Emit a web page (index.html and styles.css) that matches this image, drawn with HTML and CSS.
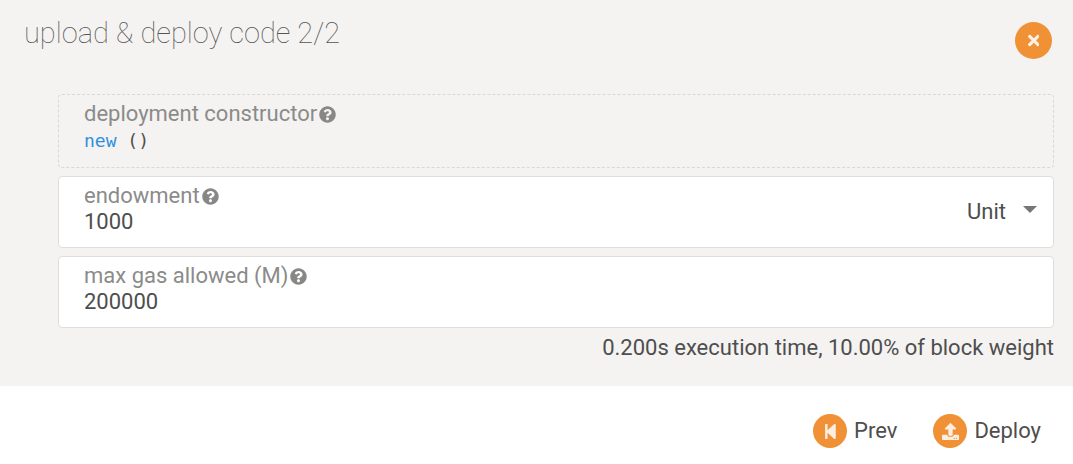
FILE: index.html
```html
<!DOCTYPE html>
<html lang="en">
<head>
<meta charset="utf-8">
<meta name="viewport" content="width=device-width, initial-scale=1">
<title>upload &amp; deploy code</title>
<link rel="stylesheet" href="styles.css">
</head>
<body>
<svg class="sprite" aria-hidden="true">
  <symbol id="help" viewBox="0 0 512 512"><path d="M504 256c0 136.997-111.043 248-248 248S8 392.997 8 256C8 119.083 119.043 8 256 8s248 111.083 248 248zM262.655 90c-54.497 0-89.255 22.957-116.549 63.758-3.536 5.286-2.353 12.415 2.715 16.258l34.699 26.31c5.205 3.947 12.621 3.008 16.665-2.122 17.864-22.658 30.113-35.797 57.303-35.797 20.429 0 45.698 13.148 45.698 32.958 0 14.976-12.363 22.667-32.534 33.976C247.128 238.528 216 254.941 216 296v4c0 6.627 5.373 12 12 12h56c6.627 0 12-5.373 12-12v-1.333c0-28.462 83.186-29.647 83.186-106.667 0-58.002-60.165-102-116.531-102zM256 338c-25.365 0-46 20.635-46 46 0 25.364 20.635 46 46 46s46-20.636 46-46c0-25.365-20.635-46-46-46z"/></symbol>
</svg>
<main class="modal">
  <header class="modal-header">
    <h1 class="modal-title">upload &amp; deploy code 2/2</h1>
    <button class="close" type="button" aria-label="Close">
      <svg class="close-icon" viewBox="0 0 352 512" aria-hidden="true"><path d="M242.72 256l100.07-100.07c12.28-12.28 12.28-32.19 0-44.48l-22.24-22.24c-12.28-12.28-32.19-12.28-44.48 0L176 189.28 75.93 89.21c-12.28-12.28-32.19-12.28-44.48 0L9.21 111.45c-12.28 12.28-12.28 32.19 0 44.48L109.28 256 9.21 356.07c-12.28 12.28-12.28 32.19 0 44.48l22.24 22.24c12.28 12.28 32.2 12.28 44.48 0L176 322.72l100.07 100.07c12.28 12.28 32.2 12.28 44.48 0l22.24-22.24c12.28-12.28 12.28-32.19 0-44.48L242.72 256z"/></svg>
    </button>
  </header>
  <form class="fields" id="deploy-form">
    <section class="field field-static">
      <div class="field-label">deployment constructor<svg class="help-icon"><use href="#help"/></svg></div>
      <code class="signature"><span class="signature-name">new</span> ()</code>
    </section>
    <div class="field">
      <div class="field-main">
        <label class="field-label" for="endowment">endowment<svg class="help-icon"><use href="#help"/></svg></label>
        <input class="field-input" id="endowment" type="text" value="1000">
      </div>
      <div class="unit">
        <select class="unit-select" aria-label="Unit of endowment"><option>Unit</option></select>
        <svg class="unit-caret" viewBox="0 0 14 7" aria-hidden="true"><path d="M0 0h14L7 7z"/></svg>
      </div>
    </div>
    <div class="field">
      <div class="field-main">
        <label class="field-label" for="gas">max gas allowed (M)<svg class="help-icon"><use href="#help"/></svg></label>
        <input class="field-input" id="gas" type="text" value="200000">
      </div>
    </div>
    <p class="estimate">0.200s execution time, 10.00% of block weight</p>
  </form>
  <footer class="actions">
    <button class="action" type="button">
      <span class="action-badge"><svg class="action-icon" viewBox="0 0 448 512" aria-hidden="true"><path d="M64 468V44c0-6.6 5.4-12 12-12h48c6.6 0 12 5.4 12 12v176.4l195.5-181C352.1 22.3 384 36.6 384 64v384c0 27.4-31.9 41.7-52.5 24.6L136 292.7V468c0 6.6-5.4 12-12 12H76c-6.6 0-12-5.4-12-12z"/></svg></span>Prev
    </button>
    <button class="action" type="submit" form="deploy-form">
      <span class="action-badge"><svg class="action-icon" viewBox="0 0 512 512" aria-hidden="true"><path d="M296 384h-80c-13.3 0-24-10.7-24-24V192h-87.7c-17.8 0-26.7-21.5-14.1-34.1L242.3 5.7c7.5-7.5 19.8-7.5 27.3 0l152.2 152.2c12.6 12.6 3.7 34.1-14.1 34.1H320v168c0 13.3-10.7 24-24 24zm216-8v112c0 13.3-10.7 24-24 24H24c-13.3 0-24-10.7-24-24V376c0-13.3 10.7-24 24-24h136v8c0 30.9 25.1 56 56 56h80c30.9 0 56-25.1 56-56v-8h136c13.3 0 24 10.7 24 24zm-124 88c0-11-9-20-20-20s-20 9-20 20 9 20 20 20 20-9 20-20zm64 0c0-11-9-20-20-20s-20 9-20 20 9 20 20 20 20-9 20-20z"/></svg></span>Deploy
    </button>
  </footer>
</main>
</body>
</html>
```
FILE: styles.css
```css
* {
  box-sizing: border-box;
}

body {
  margin: 0;
  background: #fff;
  color: #4e4e4e;
  font: 22px/26px Roboto, sans-serif;
}

button,
input,
select {
  margin: 0;
  padding: 0;
  border: 0;
  background: transparent;
  color: inherit;
  font: inherit;
}

button {
  cursor: pointer;
}

.sprite {
  display: none;
}

.modal-header {
  display: flex;
  justify-content: space-between;
  align-items: flex-start;
  padding: 14px 21px 26px 24px;
  background: #f4f3f1;
}

.modal-title {
  margin: 0;
  color: #555;
  font-size: 29px;
  font-weight: 100;
  line-height: 38px;
}

.close {
  display: flex;
  align-items: center;
  justify-content: center;
  width: 37px;
  height: 37px;
  margin-top: 8px;
  border-radius: 50%;
  background: #f19135;
}

.close-icon {
  height: 17px;
  fill: #fdf0e5;
}

.fields {
  display: flex;
  flex-direction: column;
  gap: 8px;
  padding: 9px 19px 26px 58px;
  background: #f4f3f1;
}

.field {
  display: flex;
  align-items: center;
  min-height: 72px;
  padding: 0 16px 0 25px;
  border: 1px solid #dededf;
  border-radius: 4px;
  background: #fff;
}

.field-static {
  display: block;
  min-height: 74px;
  padding-top: 6px;
  padding-bottom: 12px;
  border-style: dashed;
  border-color: #d8d8d7;
  background: transparent;
}

.field-main {
  flex: 1;
  min-width: 0;
  padding: 6px 0 12px;
}

.field-label {
  display: flex;
  align-items: center;
  gap: 2px;
  color: #8b8b8a;
}

.help-icon {
  width: 17px;
  height: 17px;
  fill: #878786;
}

.signature {
  display: block;
  font: 18px/28px "DejaVu Sans Mono", monospace;
}

.signature-name {
  color: #2e8fe0;
}

.field-input {
  display: block;
  width: 100%;
  height: 26px;
}

.unit {
  position: relative;
}

.unit-select {
  display: block;
  appearance: none;
  width: 70px;
  height: 26px;
}

.unit-caret {
  position: absolute;
  top: 7px;
  right: 0;
  width: 14px;
  height: 7px;
  fill: #767676;
  pointer-events: none;
}

.estimate {
  margin: 0;
  line-height: 24px;
  text-align: right;
}

.actions {
  display: flex;
  justify-content: flex-end;
  gap: 36px;
  padding: 28px 32px 15px;
}

.action {
  display: flex;
  align-items: center;
  gap: 7px;
}

.action-badge {
  display: flex;
  align-items: center;
  justify-content: center;
  width: 34px;
  height: 34px;
  border-radius: 50%;
  background: #f19135;
}

.action-icon {
  height: 17px;
  fill: #fdeee2;
}
```
